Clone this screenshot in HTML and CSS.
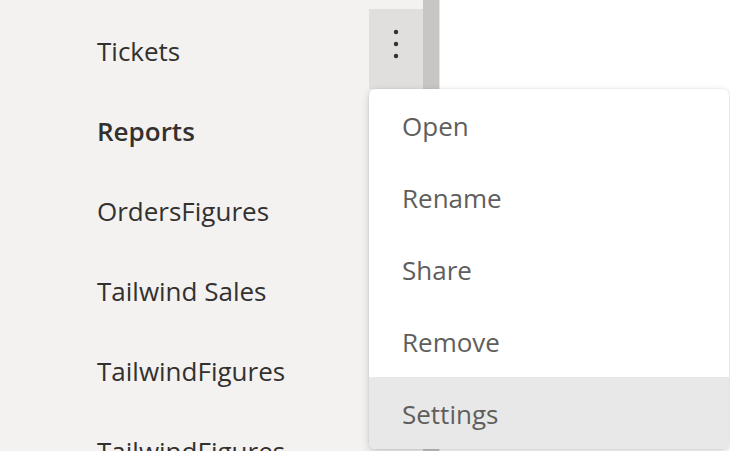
FILE: index.html
```html
<!DOCTYPE html>
<html>
<head>
<meta charset="utf-8">
<link rel="stylesheet" href="styles.css">
</head>
<body>
<div class="page">
  <nav class="sidebar">
    <div class="row">
      <span class="label">Tickets</span>
      <button class="more" aria-label="More options">
        <svg width="6" height="30" viewBox="0 0 6 30"><circle cx="3" cy="3" r="2.2"/><circle cx="3" cy="15" r="2.2"/><circle cx="3" cy="27" r="2.2"/></svg>
      </button>
    </div>
    <div class="row"><span class="label heading">Reports</span></div>
    <div class="row"><span class="label">OrdersFigures</span></div>
    <div class="row"><span class="label">Tailwind Sales</span></div>
    <div class="row"><span class="label">TailwindFigures</span></div>
    <div class="row"><span class="label">TailwindFigures</span></div>
  </nav>
  <div class="scrollbar"></div>
  <main class="content"></main>
  <ul class="menu">
    <li class="item">Open</li>
    <li class="item">Rename</li>
    <li class="item">Share</li>
    <li class="item">Remove</li>
    <li class="item active">Settings</li>
  </ul>
</div>
</body>
</html>
```
FILE: styles.css
```css
* { box-sizing: border-box; }
html, body { margin: 0; padding: 0; overflow: hidden; }
body {
  width: 730px;
  height: 451px;
  font-family: "Open Sans", "Noto Sans", sans-serif;
  background: #ffffff;
}
.page {
  position: relative;
  display: flex;
  height: 451px;
  overflow: hidden;
}
.sidebar {
  width: 423px;
  background: #f3f2f1;
  padding-top: 9px;
  display: flex;
  flex-direction: column;
}
.row {
  height: 80px;
  flex: none;
  display: flex;
  align-items: center;
  padding-left: 97px;
}
.label {
  flex: 1;
  font-size: 26px;
  color: #323130;
  white-space: nowrap;
  padding-top: 4px;
}
.heading { font-weight: 600; }
.more {
  width: 54px;
  height: 80px;
  border: 0;
  margin: 0;
  padding: 0;
  background: #e1dfdd;
  display: flex;
  align-items: center;
  justify-content: center;
  padding-bottom: 10px;
}
.more svg { fill: #323130; }
.scrollbar {
  width: 17px;
  background: #c8c6c4;
  border-right: 1px solid #e6e6e6;
}
.content { flex: 1; background: #ffffff; }
.menu {
  position: absolute;
  left: 369px;
  top: 89px;
  width: 360px;
  margin: 0;
  padding: 0;
  list-style: none;
  background: #ffffff;
  border-radius: 6px;
  box-shadow: 0 3px 8px rgba(0,0,0,0.16), 0 0 2px rgba(0,0,0,0.12);
  overflow: hidden;
}
.item {
  height: 72px;
  display: flex;
  align-items: center;
  padding-left: 33px;
  padding-top: 2px;
  font-size: 26px;
  color: #605e5c;
}
.active { background: #e8e8e8; }
```
